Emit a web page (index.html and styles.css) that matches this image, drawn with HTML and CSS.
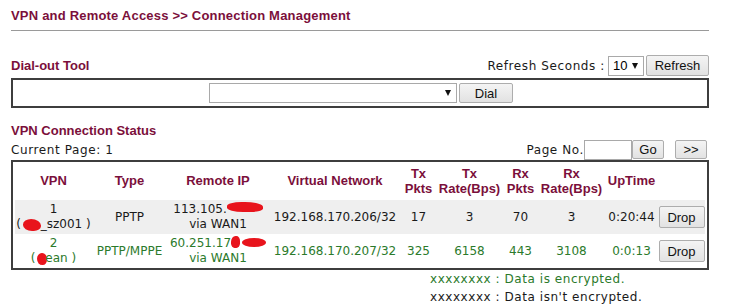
FILE: index.html
```html
<!DOCTYPE html>
<html>
<head>
<meta charset="utf-8">
<link rel="stylesheet" href="styles.css">
</head>
<body>
<div class="page">
  <div class="title">VPN and Remote Access &gt;&gt; Connection Management</div>

  <div class="bar bar-dial">
    <span class="heading">Dial-out Tool</span>
    <div class="right">
      <span class="label">Refresh Seconds :</span>
      <span class="select sel-small">10</span>
      <button class="btn btn-refresh">Refresh</button>
    </div>
  </div>

  <div class="dialbox">
    <span class="select sel-dial"></span>
    <button class="btn btn-dial">Dial</button>
  </div>

  <div class="heading status-heading">VPN Connection Status</div>

  <div class="bar bar-page">
    <span class="label">Current Page: 1</span>
    <div class="right">
      <span class="label">Page No.</span>
      <span class="input"></span>
      <button class="btn btn-go">Go</button>
      <button class="btn btn-next">&gt;&gt;</button>
    </div>
  </div>

  <div class="tablebox">
    <table class="vpn">
      <colgroup>
        <col class="c-vpn"><col class="c-type"><col class="c-ip"><col class="c-net">
        <col class="c-txp"><col class="c-txr"><col class="c-rxp"><col class="c-rxr">
        <col class="c-up"><col class="c-drop">
      </colgroup>
      <thead>
        <tr>
          <th>VPN</th><th>Type</th><th>Remote IP</th><th>Virtual Network</th>
          <th>Tx<br>Pkts</th><th>Tx<br>Rate(Bps)</th><th>Rx<br>Pkts</th><th>Rx<br>Rate(Bps)</th>
          <th>UpTime</th><th></th>
        </tr>
      </thead>
      <tbody>
        <tr class="row-plain">
          <td>1<br>( <span class="blob blob-a"></span>_sz001 )</td>
          <td>PPTP</td>
          <td>113.105.<span class="blob blob-b"></span><br>via WAN1</td>
          <td>192.168.170.206/32</td>
          <td>17</td><td>3</td><td>70</td><td>3</td>
          <td>0:20:44</td>
          <td><button class="btn btn-drop">Drop</button></td>
        </tr>
        <tr class="row-enc">
          <td>2<br>( <span class="blob blob-c"></span>ean )</td>
          <td>PPTP/MPPE</td>
          <td>60.251.17<span class="blob blob-d"></span><span class="blob blob-e"></span><br>via WAN1</td>
          <td>192.168.170.207/32</td>
          <td>325</td><td>6158</td><td>443</td><td>3108</td>
          <td>0:0:13</td>
          <td><button class="btn btn-drop">Drop</button></td>
        </tr>
      </tbody>
    </table>
  </div>

  <div class="legend">
    <div class="enc">xxxxxxxx : Data is encrypted.</div>
    <div class="plain">xxxxxxxx : Data isn't encrypted.</div>
  </div>
</div>
</body>
</html>
```

FILE: styles.css
```css
html, body {
  margin: 0;
  padding: 0;
  background: #ffffff;
}

.page {
  width: 698px;
  padding-left: 11px;
  font-family: "DejaVu Sans", Verdana, sans-serif;
  font-size: 12px;
  color: #1a1a1a;
}

.title {
  font-family: "Liberation Sans", Arial, sans-serif;
  font-weight: bold;
  font-size: 13px;
  letter-spacing: 0.2px;
  color: #7b0f3b;
  line-height: 16px;
  padding-top: 8px;
  padding-bottom: 6px;
  border-bottom: 1px solid #9a9a9a;
}

.heading {
  font-family: "Liberation Sans", Arial, sans-serif;
  font-weight: bold;
  font-size: 13px;
  color: #7b0f3b;
}

.label {
  letter-spacing: 0.6px;
}

.bar {
  display: flex;
  align-items: center;
  justify-content: space-between;
}

.right {
  display: flex;
  align-items: center;
}

.bar-dial {
  margin-top: 24px;
  height: 21px;
}

.bar-dial .label {
  margin-right: 3px;
}

.select {
  box-sizing: border-box;
  display: inline-flex;
  align-items: center;
  background: #fff;
  border: 1px solid #a9a9a9;
  font-family: "Liberation Sans", Arial, sans-serif;
  font-size: 13px;
  color: #000;
  padding: 0 5px 0 4px;
}

.select::after {
  content: "";
  border-left: 3px solid transparent;
  border-right: 3px solid transparent;
  border-top: 6px solid #111;
  margin-left: auto;
}

.sel-small {
  width: 36px;
  height: 20px;
}

.sel-dial {
  width: 248px;
  height: 20px;
}

.btn {
  box-sizing: border-box;
  font-family: "Liberation Sans", Arial, sans-serif;
  font-size: 13px;
  color: #111;
  background: linear-gradient(#f4f4f4, #e2e2e2);
  border: 1px solid #adadad;
  border-radius: 2px;
  padding: 0;
  margin: 0;
  height: 21px;
}

.btn-refresh {
  width: 63px;
  margin-left: 2px;
}

.dialbox {
  box-sizing: border-box;
  margin-top: 2px;
  height: 30px;
  border: 2px solid #3e3e3e;
  display: flex;
  align-items: center;
  justify-content: center;
  gap: 2px;
  padding-left: 2px;
}

.btn-dial {
  width: 54px;
  height: 20px;
}

.status-heading {
  margin-top: 15px;
  line-height: 16px;
}

.bar-page {
  height: 21px;
}

.input {
  box-sizing: border-box;
  display: inline-block;
  width: 48px;
  height: 20px;
  background: #fff;
  border: 1px solid #a9a9a9;
}

.btn-go {
  width: 32px;
  height: 19px;
}

.btn-next {
  width: 32px;
  height: 19px;
  margin-left: 11px;
  margin-right: 2px;
}

.tablebox {
  box-sizing: border-box;
  border: 2px solid #3e3e3e;
  padding: 2px 2px 0 2px;
  width: 698px;
}

.vpn {
  width: 100%;
  table-layout: fixed;
  border-collapse: collapse;
}

.c-vpn { width: 77px; }
.c-type { width: 75px; }
.c-ip { width: 102px; }
.c-net { width: 132px; }
.c-txp { width: 35px; }
.c-txr { width: 67px; }
.c-rxp { width: 35px; }
.c-rxr { width: 67px; }
.c-up { width: 53px; }
.c-drop { width: 47px; }

.vpn th {
  font-family: "Liberation Sans", Arial, sans-serif;
  font-weight: bold;
  font-size: 13px;
  color: #7b0f3b;
  height: 33px;
  padding: 0 0 3px 0;
  line-height: 15px;
  text-align: center;
  vertical-align: middle;
  white-space: nowrap;
}

.vpn td {
  height: 34px;
  padding: 0;
  line-height: 15px;
  text-align: center;
  vertical-align: middle;
  white-space: nowrap;
}

.row-plain td {
  background: #efefef;
  color: #1a1a1a;
}

.row-enc td {
  color: #2b7a2b;
}

.btn-drop {
  width: 46px;
  height: 22px;
}

.blob {
  display: inline-block;
  background: #e8141c;
  vertical-align: middle;
}

.blob-a {
  width: 18px;
  height: 12px;
  border-radius: 45% 55% 40% 50%;
  margin: 0 0 0 -2px;
}

.blob-b {
  width: 36px;
  height: 10px;
  border-radius: 40% 50% 35% 45%;
  margin-top: -6px;
}

.blob-c {
  width: 10px;
  height: 12px;
  border-radius: 50% 50% 45% 55%;
  margin: 0 -2px 0 -2px;
}

.blob-d {
  width: 9px;
  height: 12px;
  border-radius: 50% 40% 40% 40%;
  margin-top: -4px;
}

.blob-e {
  width: 24px;
  height: 9px;
  border-radius: 50%;
  margin-left: 2px;
  margin-top: -2px;
}

.legend {
  padding-left: 419px;
  line-height: 18px;
  letter-spacing: 0.55px;
}

.legend .enc {
  color: #2b7a2b;
}

.legend .plain {
  color: #1a1a1a;
}
```
